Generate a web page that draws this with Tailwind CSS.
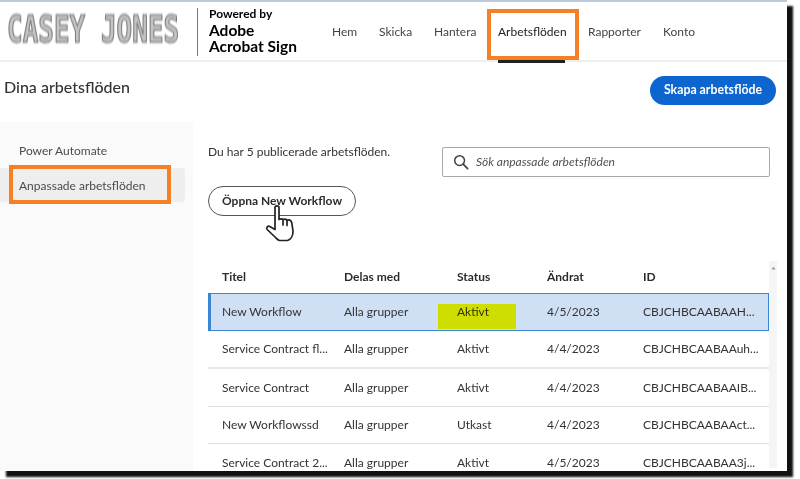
<!DOCTYPE html>
<html lang="en">
<head>
  <meta charset="UTF-8" />
  <title>Dina arbetsflöden</title>
  <script src="https://cdn.jsdelivr.net/npm/@tailwindcss/browser@4"></script>
</head>
<body class="bg-white overflow-hidden font-['Lato','Noto_Sans',sans-serif] text-[#2c2c2c]">
<div class="w-[800px] h-[479px] relative">
  <div class="w-[787px] h-[471px] bg-white border-t-2 border-[#bccadb] overflow-hidden shadow-[6px_6px_2px_#111] flex flex-col relative">

    <!-- header -->
    <header class="h-[60px] shrink-0 flex border-b-2 border-[#eeeeee]">
      <div class="w-[197px] shrink-0 pl-[7px] flex items-center">
        <span class="font-['DejaVu_Sans_Mono',monospace] font-bold text-[26px] leading-none text-[#c4c4c4] blur-[0.7px] [-webkit-text-stroke:1px_#7a7a7a] whitespace-nowrap scale-y-[1.4] mb-[5px]">CASEY JONES</span>
      </div>
      <div class="w-px h-[48px] mt-[6px] bg-[#777] shrink-0"></div>
      <div class="pl-[11px] pt-[5px] w-[134px] shrink-0 text-black font-bold">
        <div class="text-[12px] leading-[14px]">Powered by</div>
        <div class="text-[15.5px] leading-[16px] mt-[1px]">Adobe</div>
        <div class="text-[15.5px] leading-[16px]">Acrobat Sign</div>
      </div>
      <nav class="flex text-[12px] text-[#444] h-full">
        <a class="w-[47px] pt-[21px]">Hem</a>
        <a class="w-[55px] pt-[21px]">Skicka</a>
        <a class="w-[64px] pt-[21px]">Hantera</a>
        <a class="w-[90px] pt-[21px] text-[#222] relative">Arbetsflöden<span class="absolute left-0 w-[67px] top-[58px] h-[3px] bg-[#222]"></span></a>
        <a class="w-[75px] pt-[21px]">Rapporter</a>
        <a class="pt-[21px]">Konto</a>
      </nav>
    </header>

    <!-- title row -->
    <div class="h-[60px] shrink-0 flex justify-between pl-[4px] pr-[11px]">
      <h1 class="text-[16px] pt-[13px] leading-[24px] text-[#333] font-medium">Dina arbetsflöden</h1>
      <button class="mt-[14px] w-[126px] h-[29px] rounded-full bg-[#0d66d0] text-white text-[12.3px] font-bold">Skapa arbetsflöde</button>
    </div>

    <div class="flex flex-1 min-h-0">
      <!-- sidebar -->
      <aside class="w-[193px] shrink-0 bg-[#fafafa] pt-[16px] text-[12px] text-[#4b4b4b]">
        <div class="pl-[19px] h-[30px] pb-[4px] flex items-center">Power Automate</div>
        <div class="pl-[19px] pt-[2px] w-[185px] h-[34px] bg-[#eeeeee] rounded-r-[3px] flex items-center">Anpassade arbetsflöden</div>
      </aside>

      <!-- main -->
      <main class="flex-1 min-w-0 pl-[15px] relative">
        <div class="flex justify-between pt-[25px] pr-[17px]">
          <p class="text-[12px] leading-[16px] mt-[-3px] text-[#333]">Du har 5 publicerade arbetsflöden.</p>
          <div class="w-[328px] h-[30px] border border-[#a8a8a8] rounded-[2px] flex items-center pl-[10px] gap-[7px] text-[12px] italic text-[#505050]">
            <svg width="16" height="16" viewBox="0 0 16 16" fill="none" stroke="#444" stroke-width="1.5"><circle cx="6.6" cy="6.6" r="4.9"/><path d="M10.2 10.2 14.6 14.6" stroke-width="1.8" stroke-linecap="round"/></svg>
            <span>Sök anpassade arbetsflöden</span>
          </div>
        </div>
        <button class="mt-[9px] block w-[148px] h-[30px] rounded-full border border-[#555] text-[12px] font-bold text-[#2c2c2c] bg-white">Öppna New Workflow</button>

        <!-- table -->
        <div class="mt-[45px] relative w-[569px] text-[12px] text-[#333]">
          <div class="absolute right-0 top-0 w-[8px] h-[207px] bg-[#f5f5f5] flex justify-center pt-[5px]">
            <svg width="5" height="4" viewBox="0 0 5 4"><path d="M2.5 0.5 4.5 3.5H0.5Z" fill="#999"/></svg>
          </div>
          <div class="w-[561px]">
            <div class="grid grid-cols-[122px_113px_90px_96px_1fr] pl-[14px] h-[32px] items-center font-bold text-[#2c2c2c]">
              <div>Titel</div><div>Delas med</div><div>Status</div><div>Ändrat</div><div>ID</div>
            </div>
            <div class="grid grid-cols-[122px_113px_90px_96px_1fr] pl-[11px] h-[38px] items-center bg-[#cfe0f5] border border-[#3b86d4] border-l-[3px]">
              <div>New Workflow</div><div>Alla grupper</div><div>Aktivt</div><div>4/5/2023</div><div>CBJCHBCAABAAH...</div>
            </div>
            <div class="grid grid-cols-[122px_113px_90px_96px_1fr] pl-[14px] h-[38px] items-center border-b-2 border-[#e8e8e8]">
              <div>Service Contract fl...</div><div>Alla grupper</div><div>Aktivt</div><div>4/4/2023</div><div>CBJCHBCAABAAuh...</div>
            </div>
            <div class="grid grid-cols-[122px_113px_90px_96px_1fr] pl-[14px] h-[38px] items-center border-b border-[#e0e0e0]">
              <div>Service Contract</div><div>Alla grupper</div><div>Aktivt</div><div>4/4/2023</div><div>CBJCHBCAABAAIB...</div>
            </div>
            <div class="grid grid-cols-[122px_113px_90px_96px_1fr] pl-[14px] h-[37px] items-center border-b border-[#e0e0e0]">
              <div>New Workflowssd</div><div>Alla grupper</div><div>Utkast</div><div>4/4/2023</div><div>CBJCHBCAABAAct...</div>
            </div>
            <div class="grid grid-cols-[122px_113px_90px_96px_1fr] pl-[14px] h-[38px] items-center">
              <div>Service Contract 2...</div><div>Alla grupper</div><div>Aktivt</div><div>4/5/2023</div><div>CBJCHBCAABAA3j...</div>
            </div>
          </div>
        </div>
      </main>
    </div>
  </div>

  <!-- annotations drawn on top of the screenshot -->
  <div class="absolute left-[487px] top-[9px] w-[92px] h-[51px] border-[4px] border-[#f58025]"></div>
  <div class="absolute left-[9px] top-[165px] w-[162px] h-[39px] border-[4px] border-[#f58025]"></div>
  <div class="absolute left-[438px] top-[304px] w-[78px] h-[25px] bg-[#cede00] mix-blend-darken"></div>

  <!-- hand cursor -->
  <svg class="absolute left-[265px] top-[204px]" width="32" height="38" viewBox="0 0 32 38" fill="#fff" stroke="#222" stroke-width="1.7" stroke-linejoin="round" stroke-linecap="round">
    <path d="M10 3.5C10 1.3 14 1.3 14 3.5V15.5C15.5 14.6 17 14.6 18 15.5 19.6 14.8 21 15 22 16.2 24 15.6 26 16.4 26.8 18.8L28 27C28.2 31.5 26 35.5 22.5 36.5H14.5C12.5 36 11.5 34.5 10 33L2.2 25.5C0.8 23.8 2.6 21.4 4.8 22.6L10 25.5Z"/>
    <path d="M18 15.5V21M22 16.2V21.5" fill="none"/>
  </svg>
</div>
</body>
</html>
